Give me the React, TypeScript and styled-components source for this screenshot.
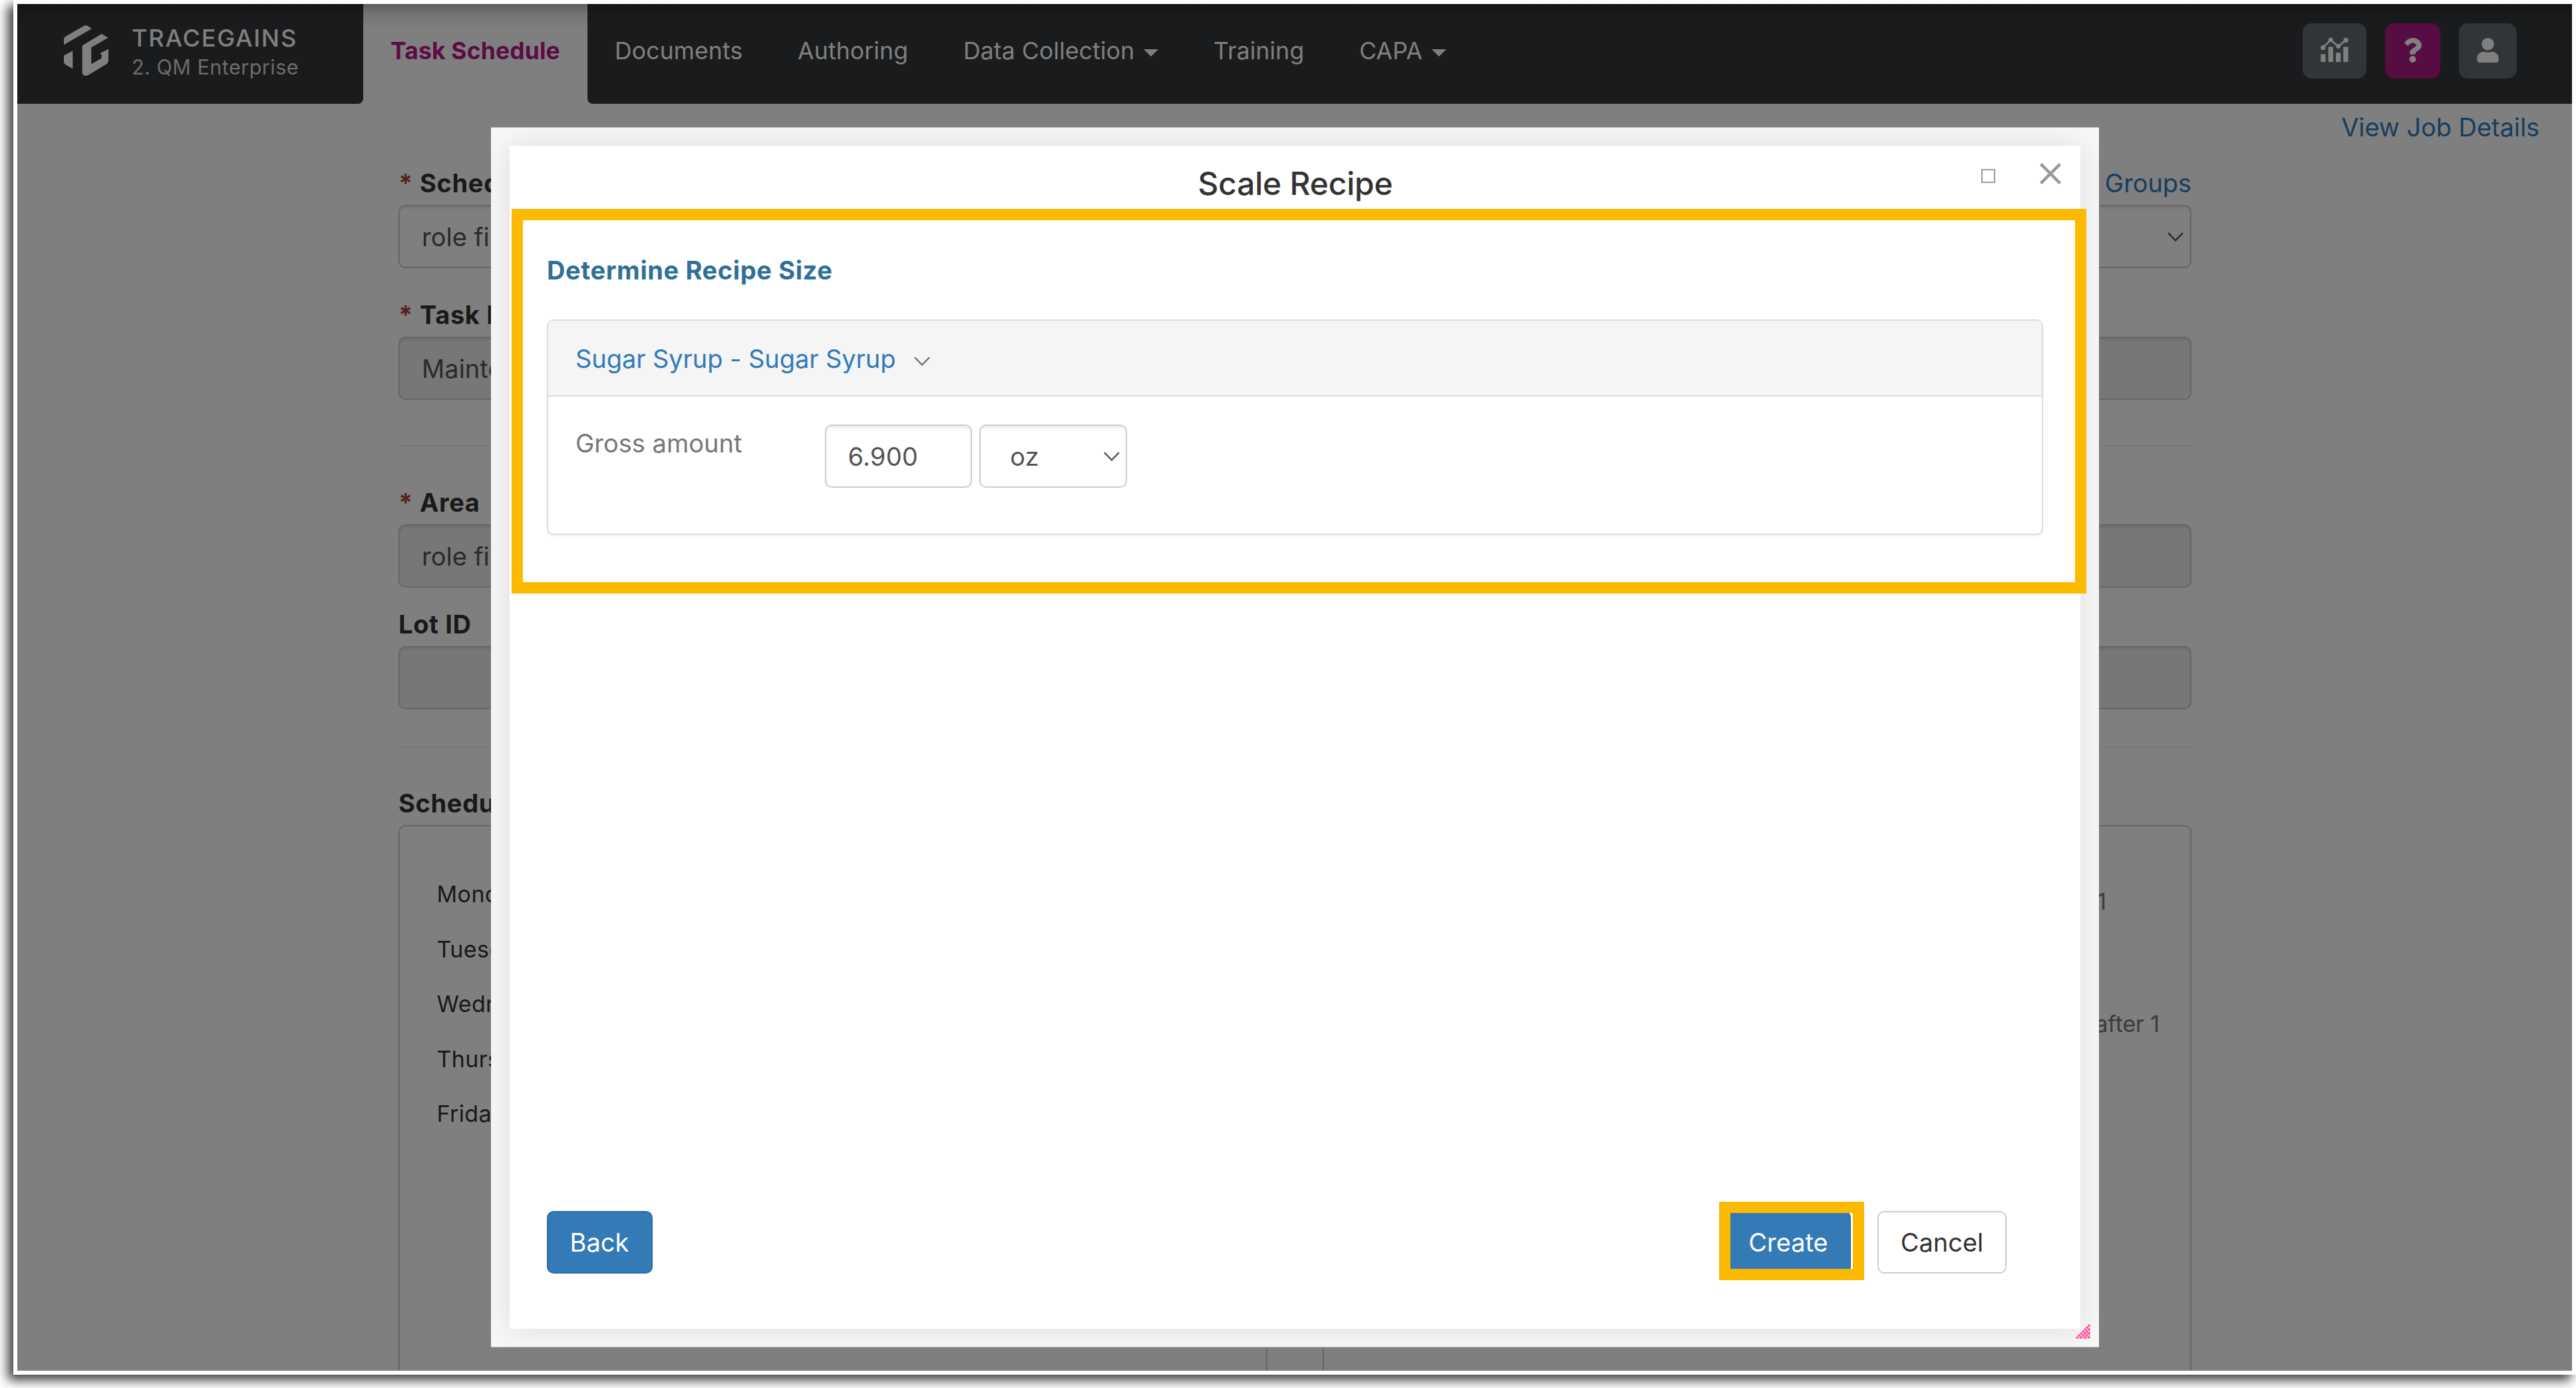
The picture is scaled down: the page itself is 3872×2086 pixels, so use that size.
import React from "react";
import styled, { createGlobalStyle, css } from "styled-components";
import { FaQuestion, FaUser } from "react-icons/fa";

const GlobalStyle = createGlobalStyle`
  *, *::before, *::after { box-sizing: border-box; }
  body {
    margin: 0;
    background: #fff;
    overflow: hidden;
    font-family: Inter, "Liberation Sans", sans-serif;
    font-size: 38px;
    color: #333;
  }
`;

const Page = styled.div`
  width: 3872px;
  height: 2086px;
  padding-left: 20px;
  overflow: hidden;
`;

const Window = styled.div`
  position: relative;
  display: flex;
  flex-direction: column;
  width: 3852px;
  height: 2066px;
  border: 6px solid #fff;
  background: #fff;
  box-shadow: -8px 8px 16px rgba(0, 0, 0, 0.78);
`;

const Viewport = styled.div`
  position: relative;
  flex: 1;
  min-height: 0;
  overflow: hidden;
`;

const TopShade = styled.div`
  position: absolute;
  inset: 0 0 auto 0;
  height: 36px;
  background: linear-gradient(rgba(0, 0, 0, 0.26), rgba(0, 0, 0, 0.1) 40%, transparent);
`;

/* Header */

const Header = styled.header`
  display: flex;
  height: 150px;
`;

const Brand = styled.div`
  display: flex;
  align-items: flex-start;
  gap: 35px;
  width: 520px;
  padding-left: 70px;
  background: #343638;
  border-bottom-right-radius: 8px;
`;

const Logo = styled.svg`
  width: 67px;
  height: 76px;
  margin-top: 32px;
  fill: #fff;
`;

const BrandText = styled.div`
  display: flex;
  flex-direction: column;
  padding-top: 30px;
  line-height: 43px;
  white-space: nowrap;
`;

const BrandName = styled.span`
  font-size: 36px;
  font-weight: 500;
  letter-spacing: 1.8px;
  color: #fff;
`;

const BrandSub = styled.span`
  font-size: 30.5px;
  letter-spacing: 0.5px;
  color: #d6d6d6;
`;

const ActiveTab = styled.div`
  display: flex;
  align-items: center;
  justify-content: center;
  width: 337px;
  padding-bottom: 10px;
  font-size: 35.5px;
  font-weight: 700;
  letter-spacing: 0.12px;
  color: #b8168a;
`;

const NavBar = styled.nav`
  display: flex;
  flex: 1;
  align-items: center;
  padding: 0 83px 10px 41px;
  background: #343638;
  border-bottom-left-radius: 8px;
`;

const NavLinks = styled.div`
  display: flex;
  flex: 1;
  gap: 82.8px;
`;

const NavItem = styled.span`
  display: flex;
  align-items: center;
  gap: 14px;
  font-size: 35.5px;
  letter-spacing: 0.15px;
  color: #fff;
`;

const Caret = styled.i`
  margin-top: 7px;
  border: 11px solid transparent;
  border-top-color: #fff;
  border-bottom: 0;
`;

const Tools = styled.div`
  display: flex;
  gap: 28px;
`;

const ToolButton = styled.button<{ $width: number; $accent?: boolean }>`
  display: flex;
  align-items: center;
  justify-content: center;
  width: ${(p) => p.$width}px;
  height: 83px;
  padding: 0 0 2px;
  border: 0;
  border-radius: 14px;
  background: ${(p) => (p.$accent ? "#ae1a84" : "#646b70")};
  color: #fff;
  font-size: 37px;
`;

/* Task form */

const LinkText = styled.a`
  letter-spacing: -0.08px;
  color: #337ab7;
`;

const PageActions = styled.div`
  display: flex;
  justify-content: flex-end;
  height: 92px;
  padding-right: 49px;
  line-height: 70px;
`;

const Form = styled.main`
  width: 2695px;
  margin-left: 573px;
`;

const Field = styled.div<{ $after: number }>`
  display: flex;
  flex-direction: column;
  gap: 6px;
  margin-bottom: ${(p) => p.$after}px;
`;

const LabelRow = styled.div`
  display: flex;
  justify-content: space-between;
  line-height: 54px;
`;

const Label = styled.label`
  display: flex;
  font-weight: 700;
  letter-spacing: 0.65px;
`;

const Star = styled.span`
  width: 32px;
  color: #a94442;
`;

const controlBase = css`
  display: flex;
  align-items: center;
  height: 94.5px;
  border: 2.5px solid #ccc;
  border-radius: 10px;
  box-shadow: inset 0 3px 3px rgba(0, 0, 0, 0.075);
  color: #555;
`;

const Control = styled.div<{ $disabled?: boolean }>`
  ${controlBase}
  justify-content: space-between;
  padding: 1px 10px 0 33px;
  background: ${(p) => (p.$disabled ? "#eee" : "#fff")};
`;

const Rule = styled.hr<{ $after: number }>`
  height: 2px;
  margin: 0 0 ${(p) => p.$after}px;
  border: 0;
  background: #eee;
`;

const Columns = styled.div`
  display: grid;
  grid-template-columns: 1fr 1fr;
  gap: 83px;
  margin-top: 6px;
`;

const ScheduleBox = styled.div`
  height: 900px;
  padding: 61px 0 0 55.5px;
  border: 2.5px solid #ccc;
  border-radius: 10px;
  font-size: 34px;
  letter-spacing: 0.4px;
  line-height: 82.5px;
`;

const Notes = styled.div`
  padding-top: 11px;
  letter-spacing: -0.1px;
  color: #777;
`;

const Note = styled.div<{ $right: number; $after?: number }>`
  padding-right: ${(p) => p.$right}px;
  margin-bottom: ${(p) => p.$after ?? 0}px;
  text-align: right;
`;

/* Dialog */

const Backdrop = styled.div`
  position: absolute;
  inset: 0;
  background: rgba(0, 0, 0, 0.5);
`;

const Dialog = styled.section`
  position: absolute;
  left: 712px;
  top: 185px;
  display: flex;
  width: 2417px;
  height: 1834px;
  padding: 27px 28px;
  border: solid #bcbcbc;
  border-width: 1px 0;
  background: #f7f7f7;
  overflow: hidden;
`;

const Sheet = styled.div`
  display: flex;
  flex: 1;
  flex-direction: column;
  background: #fff;
  box-shadow: 0 0 40px rgba(0, 0, 0, 0.11);
`;

const TitleBar = styled.div`
  display: grid;
  grid-template-columns: 1fr auto 1fr;
  align-items: center;
  height: 95px;
`;

const Title = styled.h1`
  grid-column: 2;
  margin: 0;
  padding: 17px 0 0 1px;
  font-size: 48px;
  font-weight: 500;
  letter-spacing: -0.25px;
`;

const WindowControls = styled.div`
  display: flex;
  align-items: center;
  justify-content: flex-end;
  gap: 67px;
  padding: 0 29px 11px 0;
`;

const MaximizeBox = styled.i`
  width: 21px;
  height: 21px;
  margin-top: 6px;
  border: 2px solid #999;
`;

const Highlighted = styled.div`
  position: relative;
`;

const HighlightFrame = styled.div<{ $inset: string }>`
  position: absolute;
  inset: ${(p) => p.$inset};
  border: 17px solid #fbb900;
  pointer-events: none;
`;

const Section = styled(Highlighted)`
  height: 578px;
  padding: 67px 56px 0 56px;
`;

const SectionTitle = styled.h2`
  margin: 0 0 49px;
  font-size: 38px;
  font-weight: 700;
  line-height: 50px;
  letter-spacing: 0.62px;
  color: #2f7096;
`;

const Panel = styled.div`
  height: 324px;
  border: 2.5px solid #ddd;
  border-radius: 10px;
  box-shadow: 0 2px 3px rgba(0, 0, 0, 0.05);
  overflow: hidden;
`;

const PanelHeader = styled.div`
  display: flex;
  align-items: center;
  gap: 27px;
  height: 114px;
  padding: 2px 0 0 41px;
  border-bottom: 2.5px solid #ddd;
  background: #f5f5f5;
`;

const PanelBody = styled.div`
  display: flex;
  gap: 11px;
  padding: 42px 0 0 41px;
`;

const AmountLabel = styled.span`
  width: 364px;
  line-height: 56px;
  color: #777;
`;

const AmountControl = styled.div<{ $indent: number }>`
  ${controlBase}
  justify-content: space-between;
  width: 221.3px;
  padding: 2px 9px 0 ${(p) => p.$indent}px;
  background: #fff;
  letter-spacing: 0.2px;
`;

const Footer = styled.div`
  display: flex;
  justify-content: space-between;
  margin-top: auto;
  padding: 0 111px 83.5px 55.5px;
`;

const FooterGroup = styled.div`
  display: flex;
  gap: 40px;
`;

const Button = styled.button<{ $width: number; $primary?: boolean }>`
  width: ${(p) => p.$width}px;
  height: 93.5px;
  padding: 0;
  border: 2.5px solid ${(p) => (p.$primary ? "#2e6da4" : "#ccc")};
  border-radius: 10px;
  background: ${(p) => (p.$primary ? "#337ab7" : "#fff")};
  color: ${(p) => (p.$primary ? "#fff" : "#333")};
  font: inherit;
`;

const ResizeHandle = styled.svg`
  position: absolute;
  right: 13px;
  bottom: 12px;
  width: 22px;
  height: 22px;
`;

const ChevronSvg = styled.svg`
  display: block;
  fill: none;
`;

const Chevron = ({ color, width = 24 }: { color: string; width?: number }) => (
  <ChevronSvg width={width} height={14} viewBox="0 0 24 14" stroke={color} strokeWidth={2.4}>
    <path d="M1 1.2 12 12.4 23 1.2" />
  </ChevronSvg>
);

const PanelChevron = styled.span`
  padding-top: 7px;
`;

const ChartIcon = () => (
  <svg width={42} height={38} viewBox="27 22 42 38" fill="currentColor">
    <path d="M30.7 37.7 42.3 26 53.7 35.7 65 26.3" fill="none" stroke="currentColor" strokeWidth={2.6} />
    <circle cx={30.7} cy={37.7} r={3.6} />
    <circle cx={42.3} cy={26} r={3.6} />
    <circle cx={53.7} cy={35.5} r={3.4} />
    <circle cx={65.2} cy={26.3} r={3.6} />
    <rect x={27.3} y={47.3} width={7.3} height={12} rx={1} />
    <rect x={38.7} y={36.3} width={7.3} height={23} rx={1} />
    <rect x={50} y={45.3} width={7.3} height={14} rx={1} />
    <rect x={61.3} y={36.3} width={7.3} height={23} rx={1} />
  </svg>
);

const handleDots: [number, number][] = [];
for (let row = 0; row < 7; row++) {
  for (let col = 6 - row; col < 7; col++) {
    if ((row + col) % 2 === 0) handleDots.push([2 + col * 3, 2 + row * 3]);
  }
}

const days = ["Monday", "Tuesday", "Wednesday", "Thursday", "Friday"];

export default function App() {
  return (
    <Page>
      <GlobalStyle />
      <Window>
        <Viewport>
          <Header>
            <Brand>
              <Logo viewBox="269 114 187 227" preserveAspectRatio="none">
                <path d="M269 201V177Q270 167 277 163L353 117Q364 111 373 119L385 130Z" />
                <path d="M269 250 306 228V309L275 290Q269 286 269 278Z" />
                <path d="M346 205 427 153 455 170 384 213V288L427 262V246L420 241 456 220V272Q455 282 449 287L372 337Q352 347 346 330Z" />
              </Logo>
              <BrandText>
                <BrandName>TRACEGAINS</BrandName>
                <BrandSub>2. QM Enterprise</BrandSub>
              </BrandText>
            </Brand>
            <ActiveTab>Task Schedule</ActiveTab>
            <NavBar>
              <NavLinks>
                <NavItem>Documents</NavItem>
                <NavItem>Authoring</NavItem>
                <NavItem>
                  Data Collection <Caret />
                </NavItem>
                <NavItem>Training</NavItem>
                <NavItem>
                  CAPA <Caret />
                </NavItem>
              </NavLinks>
              <Tools>
                <ToolButton $width={96}>
                  <ChartIcon />
                </ToolButton>
                <ToolButton $width={83} $accent>
                  <FaQuestion />
                </ToolButton>
                <ToolButton $width={87}>
                  <FaUser />
                </ToolButton>
              </Tools>
            </NavBar>
          </Header>

          <PageActions>
            <LinkText>View Job Details</LinkText>
          </PageActions>

          <Form>
            <Field $after={43.5}>
              <LabelRow>
                <Label>
                  <Star>*</Star>Schedule
                </Label>
                <LinkText>Groups</LinkText>
              </LabelRow>
              <Control>
                role fi
                <Chevron color="#555" />
              </Control>
            </Field>
            <Field $after={68.5}>
              <LabelRow>
                <Label>
                  <Star>*</Star>Task ID
                </Label>
              </LabelRow>
              <Control $disabled>Maintenance</Control>
            </Field>
            <Rule $after={57} />
            <Field $after={28.5}>
              <LabelRow>
                <Label>
                  <Star>*</Star>Area
                </Label>
              </LabelRow>
              <Control $disabled>role fi</Control>
            </Field>
            <Field $after={56}>
              <LabelRow>
                <Label>Lot ID</Label>
              </LabelRow>
              <Control $disabled />
            </Field>
            <Rule $after={56.5} />
            <LabelRow>
              <Label>Schedule</Label>
            </LabelRow>
            <Columns>
              <ScheduleBox>
                {days.map((day) => (
                  <div key={day}>{day}</div>
                ))}
              </ScheduleBox>
              <ScheduleBox>
                <Notes>
                  <Note $right={126} $after={101}>
                    1
                  </Note>
                  <Note $right={46}>after 1</Note>
                </Notes>
              </ScheduleBox>
            </Columns>
          </Form>

          <Backdrop />
          <TopShade />

          <Dialog>
            <Sheet>
              <TitleBar>
                <Title>Scale Recipe</Title>
                <WindowControls>
                  <MaximizeBox />
                  <svg width={32} height={32} viewBox="0 0 32 32" stroke="#999" strokeWidth={4.5}>
                    <path d="M1.5 1.5 30.5 30.5M30.5 1.5 1.5 30.5" />
                  </svg>
                </WindowControls>
              </TitleBar>
              <Section>
                <SectionTitle>Determine Recipe Size</SectionTitle>
                <Panel>
                  <PanelHeader>
                    <LinkText>Sugar Syrup - Sugar Syrup</LinkText>
                    <PanelChevron>
                      <Chevron color="#777" width={26} />
                    </PanelChevron>
                  </PanelHeader>
                  <PanelBody>
                    <AmountLabel>Gross amount</AmountLabel>
                    <AmountControl $indent={32.5}>6.900</AmountControl>
                    <AmountControl $indent={44}>
                      oz
                      <Chevron color="#555" />
                    </AmountControl>
                  </PanelBody>
                </Panel>
                <HighlightFrame $inset="0 -9px 0 3px" />
              </Section>
              <Footer>
                <Button $width={159} $primary>
                  Back
                </Button>
                <FooterGroup>
                  <Highlighted>
                    <Button $width={188} $primary>
                      Create
                    </Button>
                    <HighlightFrame $inset="-14px -20px -10px -10px" />
                  </Highlighted>
                  <Button $width={194}>Cancel</Button>
                </FooterGroup>
              </Footer>
            </Sheet>
            <ResizeHandle viewBox="0 0 22 22">
              <path d="M0 22 22 0V22Z" fill="#ffb3d5" />
              {handleDots.map(([x, y]) => (
                <circle key={`${x}-${y}`} cx={x} cy={y} r={1.7} fill="#ff4a9d" />
              ))}
            </ResizeHandle>
          </Dialog>
        </Viewport>
      </Window>
    </Page>
  );
}
